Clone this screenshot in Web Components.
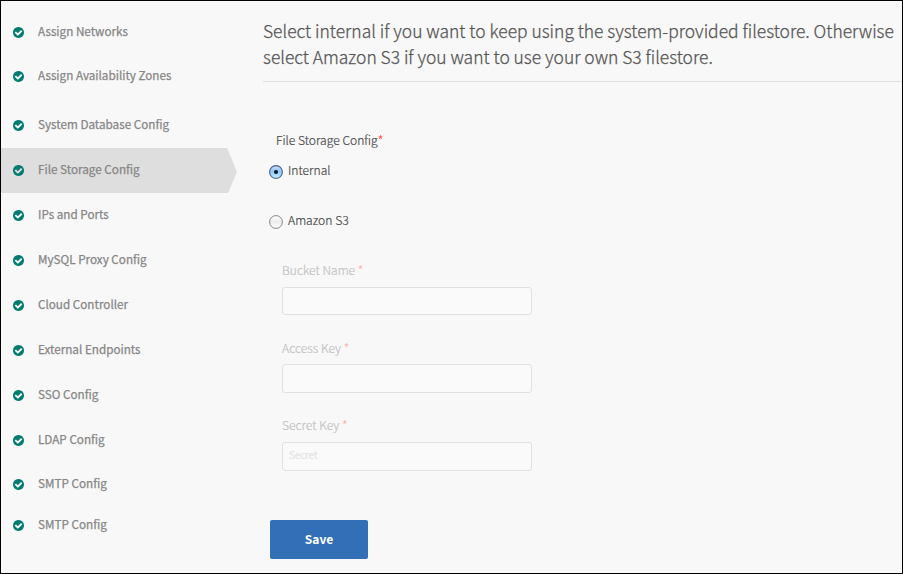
<!DOCTYPE html>
<html lang="en">
<head>
<meta charset="utf-8">
<title>File Storage Config</title>
<style>
html,body{margin:0;height:100%}
body{font-family:"Noto Sans CJK JP","Noto Sans",sans-serif;background:#f8f8f8}
</style>
</head>
<body>
<setup-page></setup-page>
<script>
function define(name, html){
  const t=document.createElement('template');
  t.innerHTML=html;
  customElements.define(name,class extends HTMLElement{
    constructor(){super();this.attachShadow({mode:'open'}).append(t.content.cloneNode(true));}
  });
}

define('check-icon',`<style>:host{display:block;width:11px;height:11px}svg{display:block}</style>
<svg width="11" height="11" viewBox="0 128 1536 1536"><path fill="#007b6e" d="M1284 734q0-28-18-46l-91-90q-19-19-45-19t-45 19l-408 407-226-226q-19-19-45-19t-45 19l-91 90q-18 18-18 46 0 27 18 45l362 362q19 19 45 19 27 0 46-19l543-543q18-18 18-45zm252 162q0 209-103 385.5t-279.5 279.5-385.5 103-385.5-103-279.5-279.5-103-385.5 103-385.5 279.5-279.5 385.5-103 385.5 103 279.5 279.5 103 385.5z"/></svg>`);

define('step-item',`<style>
:host{display:flex;align-items:center;width:236px;height:45px;box-sizing:border-box;padding:0 0 0 12px;gap:14px;font-size:11.7px;line-height:20px;color:#868686;-webkit-text-stroke:.25px #868686}
:host([short]){height:40px}
:host([mid]){height:42px}
:host([tall]){height:44px}
:host([spaced]){margin-bottom:5px}
:host([active]){background:#dedede;clip-path:polygon(0 0,226.5px 0,226.5px 1px,236px 24px,227px 45px,0 45px)}
span{padding-bottom:3px;white-space:nowrap}
</style><check-icon></check-icon><span><slot></slot></span>`);

define('step-list',`<style>:host{display:flex;flex-direction:column;width:262px;padding-top:9px;box-sizing:border-box;flex:none}</style><slot></slot>`);

define('page-intro',`<style>:host{display:block;box-sizing:border-box;height:81px;padding-top:17px;border-bottom:1px solid #dfdfdf;font-size:17.46px;line-height:26px;font-weight:300;color:#545454;-webkit-text-stroke:.25px #545454;white-space:nowrap}</style><slot></slot>`);

define('required-mark',`<style>:host{color:#ff4a43;font-weight:400;-webkit-text-stroke:0}</style>*`);

define('radio-option',`<style>
:host{display:flex;align-items:center;height:20px;gap:5px;font-size:12.14px;line-height:20px;font-weight:300;color:#484848;-webkit-text-stroke:.2px #484848}
svg{display:block;margin-top:4px}
.on,:host([checked]) .off{display:none}
:host([checked]) .on{display:block}
</style>
<svg width="14" height="14" viewBox="0 0 14 14">
<defs>
<linearGradient id="b" x1="0" y1="0" x2="0" y2="1"><stop offset="0" stop-color="#c9e2f8"/><stop offset=".45" stop-color="#8fc5f3"/><stop offset="1" stop-color="#bff0ff"/></linearGradient>
<linearGradient id="s" x1="0" y1="0" x2="0" y2="1"><stop offset="0" stop-color="#4a5a96"/><stop offset="1" stop-color="#56708f"/></linearGradient>
<linearGradient id="g" x1="0" y1="0" x2="0" y2="1"><stop offset="0" stop-color="#fff"/><stop offset=".5" stop-color="#ececec"/><stop offset="1" stop-color="#fff"/></linearGradient>
</defs>
<g class="on"><circle cx="7" cy="7" r="6.4" fill="url(#b)" stroke="url(#s)" stroke-width="1.1"/><circle cx="7" cy="7" r="2" fill="#0b1526"/></g>
<g class="off"><circle cx="7" cy="7" r="6.4" fill="url(#g)" stroke="#858585" stroke-width="1"/></g>
</svg><span><slot></slot></span>`);

define('text-field',`<style>
:host{display:block;width:250px}
.l{font-size:12.14px;line-height:20px;height:20px;font-weight:300;color:#c2c2c2;-webkit-text-stroke:.2px #c2c2c2;white-space:pre}
required-mark{opacity:.4}
.box{box-sizing:border-box;height:var(--box,28px);margin-top:var(--gap,6px);border:1px solid #e1e1e1;border-radius:3px;background:#fafafa;padding:0 6px 4px;display:flex;align-items:center;font-size:9.7px;line-height:16px;color:#e4e4e4;-webkit-text-stroke:.2px #e4e4e4}
</style><div class="l"><slot></slot> <required-mark></required-mark></div><div class="box"><slot name="hint"></slot></div>`);

define('save-button',`<style>:host{display:flex;align-items:center;justify-content:center;box-sizing:border-box;width:98px;height:39px;padding-bottom:2px;background:#326fb6;border-radius:2px;color:#fff;font-size:12px;line-height:20px;font-weight:700}</style><slot></slot>`);

define('storage-form',`<style>
:host{display:flex;flex-direction:column;padding:48px 0 0 6px}
.title{font-size:12.14px;line-height:20px;font-weight:300;color:#484848;-webkit-text-stroke:.2px #484848;padding-left:7px}
.title+radio-option{margin-top:10px}
radio-option+radio-option{margin-top:30px}
.fields{display:flex;flex-direction:column;padding:30px 0 0 13px}
save-button{margin:49px 0 0 1px}
.a{--gap:7px}
.b{--gap:6px;--box:29px;margin-top:23px}
.c{--gap:7px;--box:29px;margin-top:22px}
</style>
<div class="title">File Storage Config<required-mark></required-mark></div>
<radio-option checked>Internal</radio-option>
<radio-option>Amazon S3</radio-option>
<div class="fields">
<text-field class="a">Bucket Name</text-field>
<text-field class="b">Access Key</text-field>
<text-field class="c">Secret Key<span slot="hint">Secret</span></text-field>
</div>
<save-button>Save</save-button>`);

define('setup-page',`<style>
:host{display:flex;box-sizing:border-box;width:903px;height:574px;border:1px solid #000;background:#f8f8f8;overflow:hidden}
main{flex:1;min-width:0}
</style>
<step-list>
<step-item tall>Assign Networks</step-item>
<step-item tall spaced>Assign Availability Zones</step-item>
<step-item>System Database Config</step-item>
<step-item active>File Storage Config</step-item>
<step-item>IPs and Ports</step-item>
<step-item>MySQL Proxy Config</step-item>
<step-item>Cloud Controller</step-item>
<step-item>External Endpoints</step-item>
<step-item>SSO Config</step-item>
<step-item>LDAP Config</step-item>
<step-item mid>SMTP Config</step-item>
<step-item short>SMTP Config</step-item>
</step-list>
<main>
<page-intro>Select internal if you want to keep using the system-provided filestore. Otherwise<br>select Amazon S3 if you want to use your own S3 filestore.</page-intro>
<storage-form></storage-form>
</main>`);
</script>
</body>
</html>
